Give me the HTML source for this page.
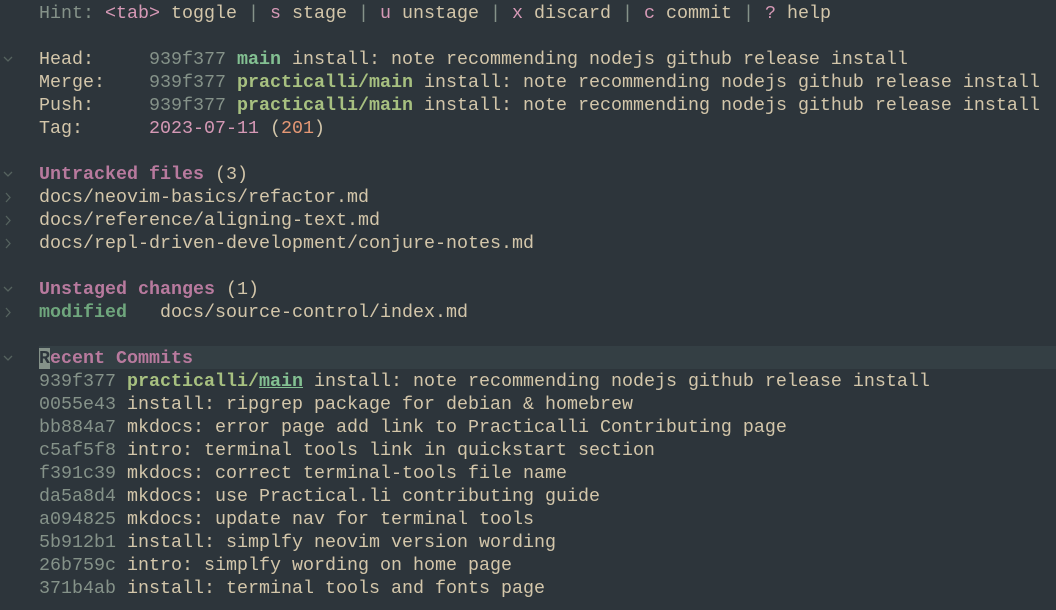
<!DOCTYPE html><html><head><style>
body{margin:0;width:1056px;height:610px;background:#2d353b;overflow:hidden;font-family:"Liberation Mono","DejaVu Sans Mono",monospace;font-size:18.33px;color:#d3c6aa}
.l{position:absolute;left:39px;height:23px;line-height:23px;white-space:pre}
.f{position:absolute;left:2px;width:12px;height:23px}
.g{color:#859289}.p{color:#d699b6}.o{color:#e69875}.a{color:#83c092;font-weight:bold}.y{color:#a7c080;font-weight:bold}
.h{color:#b87a9e;font-weight:bold}.m{color:#6fa67d;font-weight:bold}
.cl{position:absolute;left:39px;right:0;top:346px;height:23px;background:#343f44}
.cur{background:#859289;color:#2d353b}
</style></head><body>
<svg width="0" height="0" style="position:absolute"><defs>
<symbol id="dn" viewBox="0 0 12 23"><path d="M2 9 L6 13 L10 9" fill="none" stroke="#56635f" stroke-width="1.3"/></symbol>
<symbol id="rt" viewBox="0 0 12 23"><path d="M4 7 L8 11.5 L4 16" fill="none" stroke="#56635f" stroke-width="1.3"/></symbol>
</defs></svg>
<div class="cl"></div>
<div class="l" style="top:2px"><span class="g">Hint: </span><span class="p">&lt;tab&gt;</span> toggle <span class="g">|</span> <span class="p">s</span> stage <span class="g">|</span> <span class="p">u</span> unstage <span class="g">|</span> <span class="p">x</span> discard <span class="g">|</span> <span class="p">c</span> commit <span class="g">|</span> <span class="p">?</span> help</div>
<svg class="f" style="top:48px"><use href="#dn"/></svg>
<div class="l" style="top:48px">Head:     <span class="g">939f377</span> <span class="a">main</span> install: note recommending nodejs github release install</div>
<div class="l" style="top:71px">Merge:    <span class="g">939f377</span> <span class="y">practicalli/main</span> install: note recommending nodejs github release install</div>
<div class="l" style="top:94px">Push:     <span class="g">939f377</span> <span class="y">practicalli/main</span> install: note recommending nodejs github release install</div>
<div class="l" style="top:117px">Tag:      <span class="p">2023-07-11</span> (<span class="o">201</span>)</div>
<svg class="f" style="top:163px"><use href="#dn"/></svg>
<div class="l" style="top:163px"><span class="h">Untracked files</span> (3)</div>
<svg class="f" style="top:186px"><use href="#rt"/></svg><div class="l" style="top:186px">docs/neovim-basics/refactor.md</div>
<svg class="f" style="top:209px"><use href="#rt"/></svg><div class="l" style="top:209px">docs/reference/aligning-text.md</div>
<svg class="f" style="top:232px"><use href="#rt"/></svg><div class="l" style="top:232px">docs/repl-driven-development/conjure-notes.md</div>
<svg class="f" style="top:278px"><use href="#dn"/></svg>
<div class="l" style="top:278px"><span class="h">Unstaged changes</span> (1)</div>
<svg class="f" style="top:301px"><use href="#rt"/></svg><div class="l" style="top:301px"><span class="m">modified</span>   docs/source-control/index.md</div>
<svg class="f" style="top:347px"><use href="#dn"/></svg>
<div class="l" style="top:347px"><span class="h"><span class="cur">R</span>ecent Commits</span></div>
<div class="l" style="top:370px"><span class="g">939f377</span> <span class="y">practicalli/<span style="color:#83c092;text-decoration:underline">main</span></span> install: note recommending nodejs github release install</div>
<div class="l" style="top:393px"><span class="g">0055e43</span> install: ripgrep package for debian &amp; homebrew</div>
<div class="l" style="top:416px"><span class="g">bb884a7</span> mkdocs: error page add link to Practicalli Contributing page</div>
<div class="l" style="top:439px"><span class="g">c5af5f8</span> intro: terminal tools link in quickstart section</div>
<div class="l" style="top:462px"><span class="g">f391c39</span> mkdocs: correct terminal-tools file name</div>
<div class="l" style="top:485px"><span class="g">da5a8d4</span> mkdocs: use Practical.li contributing guide</div>
<div class="l" style="top:508px"><span class="g">a094825</span> mkdocs: update nav for terminal tools</div>
<div class="l" style="top:531px"><span class="g">5b912b1</span> install: simplfy neovim version wording</div>
<div class="l" style="top:554px"><span class="g">26b759c</span> intro: simplfy wording on home page</div>
<div class="l" style="top:577px"><span class="g">371b4ab</span> install: terminal tools and fonts page</div>
</body></html>
